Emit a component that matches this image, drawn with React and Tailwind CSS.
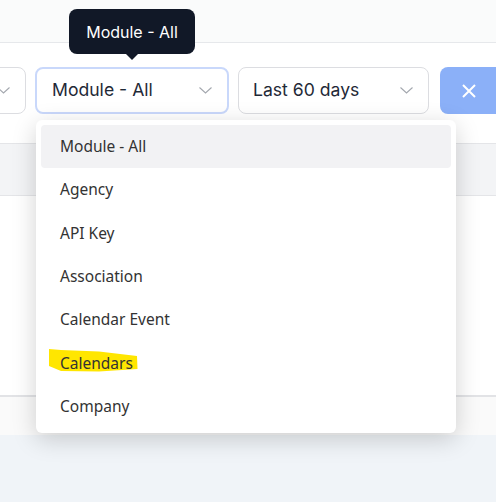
import React from 'react';

const Chevron = () => (
  <svg width="13" height="7" viewBox="0 0 13 7" fill="none" className="shrink-0">
    <path d="M0.5 0.5 L6.5 6 L12.5 0.5" stroke="#a3a7ae" strokeWidth="1.1" />
  </svg>
);

const SelectBox = ({ label, width, focused, className = '' }) => (
  <div
    className={`flex h-[47px] shrink-0 items-center justify-between rounded-lg bg-white pl-[14px] pr-[15px] ${
      focused
        ? 'border-2 border-[#c9d8fb] pl-[15px] pr-[14px]'
        : 'border border-[#dcdde1]'
    } ${className}`}
    style={{ width }}
  >
    <span className="text-[17.6px] text-[#1f2937]">{label}</span>
    <Chevron />
  </div>
);

const options = [
  'Module - All',
  'Agency',
  'API Key',
  'Association',
  'Calendar Event',
  'Calendars',
  'Company',
];

const App = () => {
  return (
    <div className="relative h-[502px] w-[496px] overflow-hidden bg-[#f0f4f8] font-['Inter',sans-serif]">
      {/* top bar */}
      <div className="h-[43px] border-b border-[#e6e8eb] bg-[#fafbfb]" />

      {/* filters */}
      <div className="flex h-[100px] items-start gap-[9px] bg-white pt-[24px]">
        <SelectBox label="" width={186} className="ml-[-160px]" />
        <SelectBox label="Module - All" width={194} focused />
        <SelectBox label="Last 60 days" width={191} />
        <button className="ml-[2px] flex h-[47px] w-[80px] shrink-0 items-center justify-start rounded-lg bg-[#8bb0f8] pl-[21px]">
          <svg width="16" height="16" viewBox="0 0 16 16" fill="none">
            <path d="M2 2 L14 14 M14 2 L2 14" stroke="white" strokeWidth="2" />
          </svg>
        </button>
      </div>

      {/* table */}
      <div className="h-[53px] border-y border-[#e4e5e8] bg-[#f3f4f6]" />
      <div className="h-[201px] border-b-2 border-[#e2e3e6] bg-white" />
      <div className="h-[38px] bg-[#fafafa]" />

      {/* tooltip */}
      <div className="absolute left-[69px] top-[9px] flex h-[45px] w-[126px] items-center justify-center rounded-lg bg-[#111827] text-[16px] text-white">
        Module - All
        <div className="absolute left-[56px] top-[44px] h-0 w-0 border-x-[7px] border-t-[7px] border-x-transparent border-t-[#111827]" />
      </div>

      {/* dropdown */}
      <div className="absolute left-[36px] top-[120px] w-[420px] rounded-md bg-white p-[5px] shadow-[0_6px_24px_rgba(0,0,0,0.18)] font-['Noto_Sans',sans-serif]">
        {options.map((o, i) => (
          <div
            key={o}
            className={`relative flex h-[43.3px] items-center rounded pl-[19px] text-[15.5px] text-[#333333] ${
              i === 0 ? 'bg-[#f2f2f4]' : ''
            }`}
          >
            {o === 'Calendars' && (
              <svg
                className="absolute left-[8px] top-[7px]"
                width="90"
                height="25"
                viewBox="0 0 90 25"
              >
                <path
                  d="M0 1 L12 2 L50 3.5 L88 8 L88.5 21 L50 23.5 L12 23 L0 18 Z"
                  fill="#ffe600"
                />
              </svg>
            )}
            <span className="relative">{o}</span>
          </div>
        ))}
      </div>
    </div>
  );
};

export default App;
